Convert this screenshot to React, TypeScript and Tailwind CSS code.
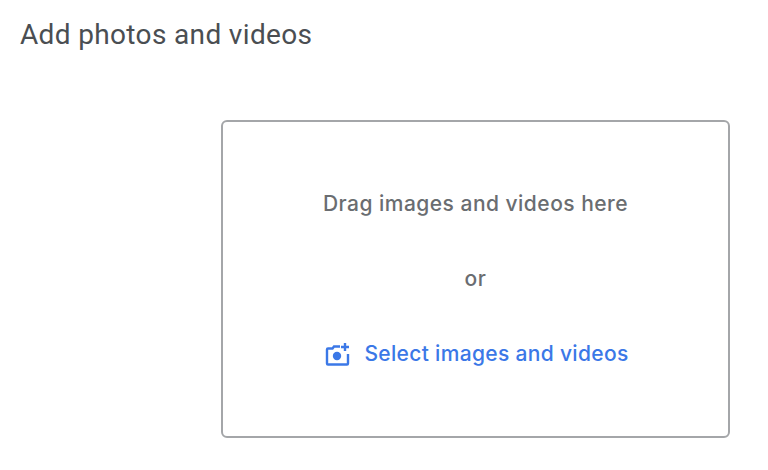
export default function App() {
  return (
    <div className="w-[768px] h-[470px] bg-white overflow-hidden font-['Roboto',sans-serif]">
      <h1 className="pl-5 pt-[17px] text-[28px] leading-9 font-normal tracking-[0.35px] text-[#4a4e52]">Add photos and videos</h1>
      <div className="mt-[67px] ml-[221px] w-[509px] h-[318px] border-2 border-[#a4a6a9] rounded-md flex flex-col items-center font-['Inter',sans-serif]">
        <p className="mt-[68px] text-[21px] leading-7 font-medium tracking-[0.48px] text-[#6a6d71]">Drag images and videos here</p>
        <p className="mt-[47px] text-[21px] leading-7 font-medium tracking-[0.48px] text-[#6a6d71]">or</p>
        <button className="mt-[47px] ml-[3px] flex items-center gap-[14px] text-[21px] leading-7 font-medium tracking-[0.33px] text-[#3b78e7]">
          <svg width="25" height="25" viewBox="0 0 25 25" fill="none">
            <path d="M15 4.5H9L7.5 6.5H3a1 1 0 0 0-1 1v14a1 1 0 0 0 1 1h19a1 1 0 0 0 1-1V12" stroke="#3b78e7" strokeWidth="2.4" />
            <circle cx="12" cy="14" r="4.2" fill="#3b78e7" />
            <path d="M20 1v8M16 5h8" stroke="#3b78e7" strokeWidth="2.4" />
          </svg>
          Select images and videos
        </button>
      </div>
    </div>
  );
}
